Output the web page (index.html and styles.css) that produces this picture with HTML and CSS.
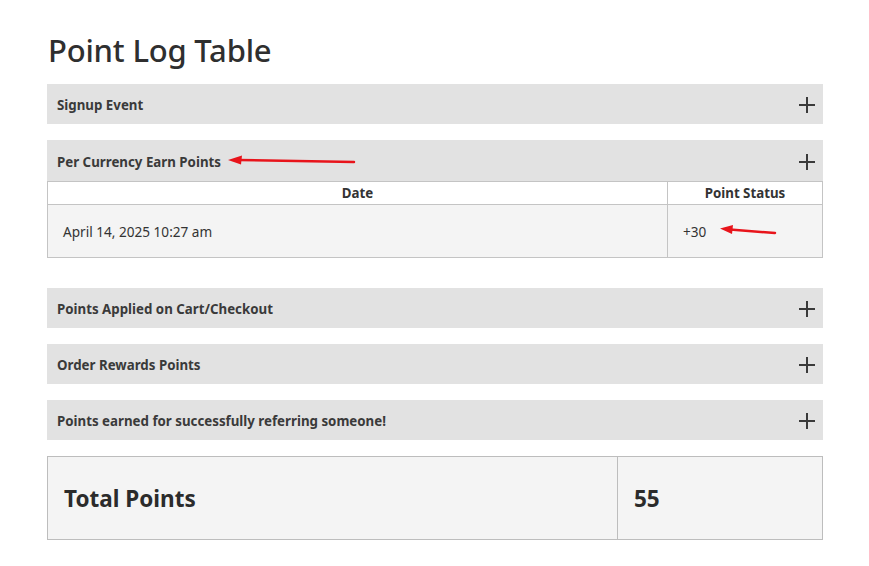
FILE: index.html
```html
<!DOCTYPE html>
<html lang="en">
  <head>
    <meta charset="UTF-8" />
    <meta name="viewport" content="width=device-width, initial-scale=1.0" />
    <title>Point Log Table</title>
    <link rel="stylesheet" href="styles.css">
  </head>
  <body>
    <div class="container">
      <h1>Point Log Table</h1>

      <div class="section">
        <div class="section-head">
          <span>Signup Event</span>
          <span class="plus"></span>
        </div>
      </div>

      <div class="section open">
        <div class="section-head">
          <span>Per Currency Earn Points</span>
          <span class="plus"></span>
          <svg class="arrow arrow-title" width="130" height="12" viewBox="0 0 130 12">
            <path d="M126 7 L10 5" stroke="#e8141b" stroke-width="2.5" stroke-linecap="round" fill="none" />
            <path d="M0 5 L14 0.5 L13 9.5 Z" fill="#e8141b" />
          </svg>
        </div>
        <table class="log">
          <thead>
            <tr>
              <th class="col-date">Date</th>
              <th class="col-status">Point Status</th>
            </tr>
          </thead>
          <tbody>
            <tr>
              <td>April 14, 2025 10:27 am</td>
              <td class="status-cell">
                +30
                <svg class="arrow arrow-status" width="58" height="12" viewBox="0 0 58 12">
                  <path d="M55 8 L10 4.5" stroke="#e8141b" stroke-width="2.5" stroke-linecap="round" fill="none" />
                  <path d="M0 3.5 L13 0 L12 9 Z" fill="#e8141b" />
                </svg>
              </td>
            </tr>
          </tbody>
        </table>
      </div>

      <div class="section">
        <div class="section-head">
          <span>Points Applied on Cart/Checkout</span>
          <span class="plus"></span>
        </div>
      </div>

      <div class="section">
        <div class="section-head">
          <span>Order Rewards Points</span>
          <span class="plus"></span>
        </div>
      </div>

      <div class="section">
        <div class="section-head">
          <span>Points earned for successfully referring someone!</span>
          <span class="plus"></span>
        </div>
      </div>

      <table class="total">
        <tr>
          <td class="total-label">Total Points</td>
          <td class="total-value">55</td>
        </tr>
      </table>
    </div>
  </body>
</html>
```

FILE: styles.css
```css
/* General Styles */
body {
  font-family: "Noto Sans", "Open Sans", sans-serif;
  background-color: #fff;
  color: #333;
  margin: 0;
  padding: 0;
}
.container {
  width: 776px;
  margin: 0 0 0 47px;
  padding-top: 30px;
}
h1 {
  font-size: 31px;
  font-weight: 500;
  color: #2f2f2f;
  line-height: 40px;
  margin: 0 0 14px 1px;
  letter-spacing: -0.2px;
}

/* Accordion sections */
.section {
  margin-bottom: 16px;
}
.section.open {
  margin-bottom: 30px;
}
.section-head {
  position: relative;
  display: flex;
  align-items: center;
  justify-content: space-between;
  box-sizing: border-box;
  height: 40px;
  padding: 2px 8px 0 10px;
  background: #e2e2e2;
  font-size: 13.3px;
  font-weight: 700;
  color: #3a3a3a;
}
.section.open .section-head {
  height: 41px;
}
.plus {
  position: relative;
  width: 16px;
  height: 16px;
}
.plus::before,
.plus::after {
  content: "";
  position: absolute;
  background: #3a3a3a;
}
.plus::before {
  left: 0;
  right: 0;
  top: 7px;
  height: 2px;
}
.plus::after {
  top: 0;
  bottom: 0;
  left: 7px;
  width: 2px;
}

/* Log table */
table {
  width: 100%;
  border-collapse: collapse;
}
.log th,
.log td {
  border: 1px solid #c4c4c4;
  font-size: 13.3px;
  color: #333;
}
.log th {
  height: 22px;
  padding: 0;
  background: #fff;
  font-weight: 700;
  text-align: center;
}
.log td {
  height: 52px;
  padding: 0 15px;
  background: #f4f4f4;
  font-size: 13.6px;
}
.col-date {
  width: 619px;
}
.status-cell {
  position: relative;
}

/* Red annotation arrows */
.arrow {
  position: absolute;
}
.arrow-title {
  left: 181px;
  top: 15px;
}
.arrow-status {
  left: 52px;
  top: 20px;
}

/* Total */
.total {
  border: 1px solid #bdbdbd;
}
.total td {
  height: 82px;
  padding: 0 16px;
  background: #f4f4f4;
  font-size: 22.5px;
  font-weight: 700;
  color: #2b2b2b;
}
.total-label {
  width: 537px;
  border-right: 1px solid #bdbdbd;
}
.total-value {
  padding-left: 15px;
}
```
